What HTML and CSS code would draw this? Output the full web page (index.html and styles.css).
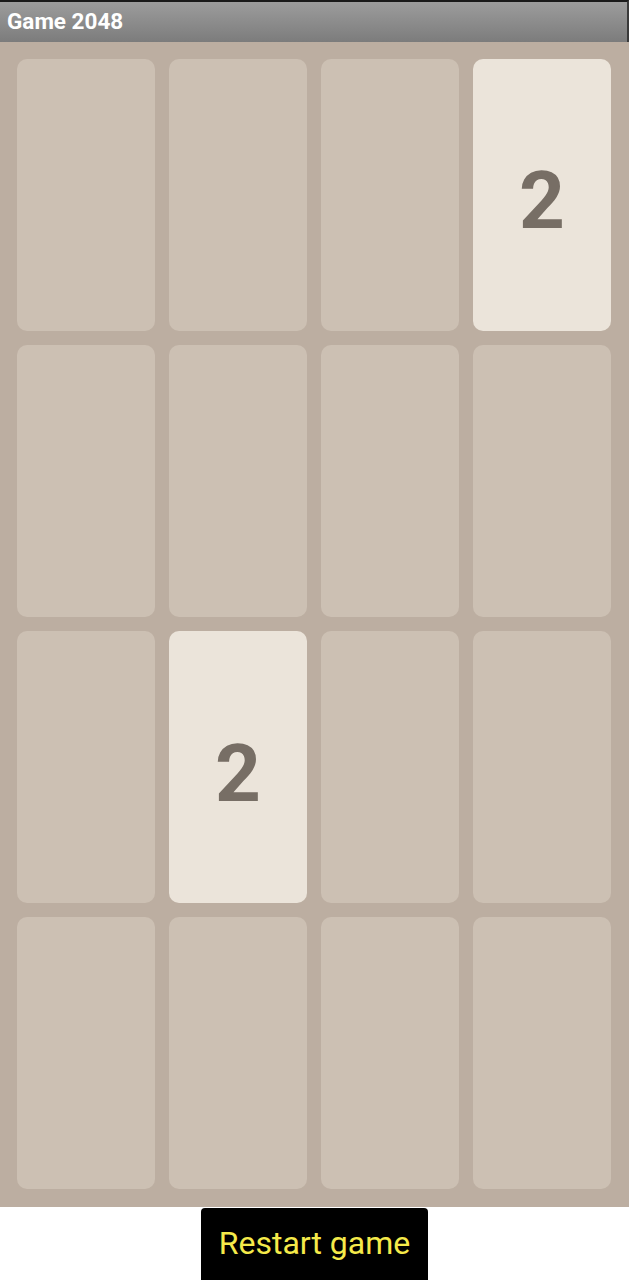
FILE: index.html
```html
<!DOCTYPE html>
<html lang="en">
<head>
<meta charset="utf-8">
<title>Game 2048</title>
<link rel="stylesheet" href="styles.css">
</head>
<body>
<header class="app-bar">
  <h1 class="app-title">Game 2048</h1>
</header>
<main class="board">
  <div class="tile"></div>
  <div class="tile"></div>
  <div class="tile"></div>
  <div class="tile tile-2">2</div>
  <div class="tile"></div>
  <div class="tile"></div>
  <div class="tile"></div>
  <div class="tile"></div>
  <div class="tile"></div>
  <div class="tile tile-2">2</div>
  <div class="tile"></div>
  <div class="tile"></div>
  <div class="tile"></div>
  <div class="tile"></div>
  <div class="tile"></div>
  <div class="tile"></div>
</main>
<div class="actions">
  <button class="restart" type="button">Restart game</button>
</div>
</body>
</html>
```

FILE: styles.css
```css
html, body {
  margin: 0;
  padding: 0;
  background: #ffffff;
  font-family: Roboto, "Liberation Sans", sans-serif;
}

.app-bar {
  height: 42px;
  box-sizing: border-box;
  border-top: 2px solid #1a1a1a;
  border-right: 2px solid #3a3a3a;
  background: linear-gradient(#9c9c9c, #7c7c7c);
  display: flex;
  align-items: center;
  padding-left: 7px;
}

.app-title {
  margin: 0;
  color: #ffffff;
  font-size: 22.5px;
  font-weight: 700;
  line-height: 1;
  padding-bottom: 1px;
}

.board {
  box-sizing: border-box;
  height: 1165px;
  background: #bcaea1;
  padding: 17px 18px 18px 17px;
  display: grid;
  grid-template-columns: repeat(4, 1fr);
  grid-template-rows: repeat(4, 1fr);
  gap: 14.3px 14px;
}

.tile {
  background: #ccc0b3;
  border-radius: 10px;
  display: flex;
  align-items: center;
  justify-content: center;
  color: #776e65;
  font-size: 80px;
  font-weight: 700;
  padding-top: 13px;
}

.tile-2 {
  background: #ebe4da;
}

.actions {
  display: flex;
  justify-content: center;
}

.restart {
  width: 227px;
  height: 76px;
  margin-top: 1px;
  border: 0;
  border-radius: 4px;
  background: #000000;
  color: #f5ea4a;
  font-family: Roboto, "Liberation Sans", sans-serif;
  font-size: 32px;
  padding: 0 0 7px;
}
```
